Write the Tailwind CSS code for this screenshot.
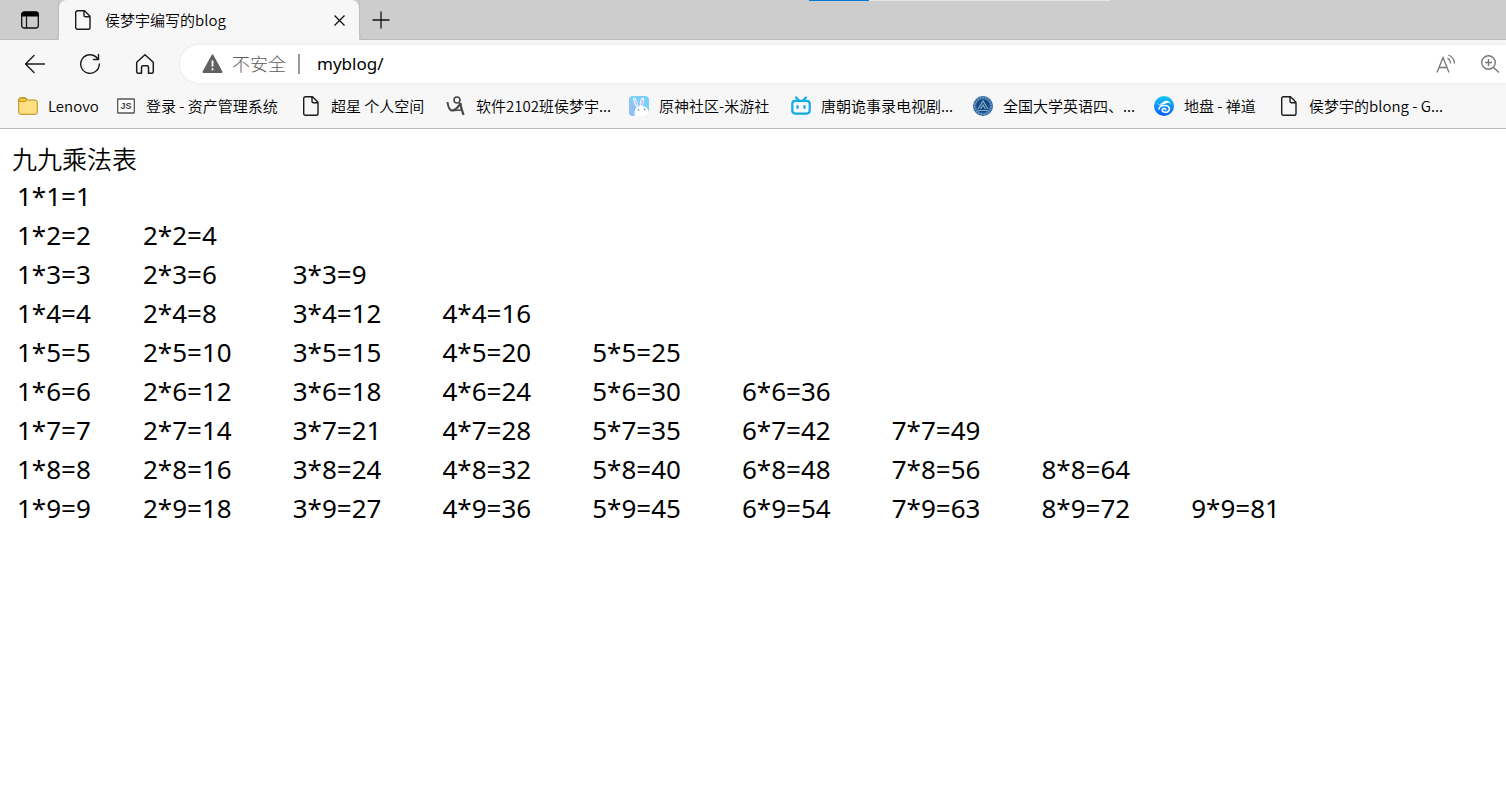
<!DOCTYPE html>
<html lang="zh-CN">
<head>
    <meta charset="UTF-8">
    <meta name="viewport" content="width=device-width, initial-scale=1.0">
    <title>侯梦宇编写的blog</title>
    <script src="https://cdn.jsdelivr.net/npm/@tailwindcss/browser@4"></script>
</head>
<body class="bg-white min-h-screen overflow-x-hidden text-black font-['Noto_Sans_CJK_SC',sans-serif] font-[350]">
    <svg class="hidden">
        <symbol id="page" viewBox="0 0 20 20">
            <path d="M4.500 .7h7L17 6.200v11.300a1.800 1.800 0 0 1-1.800 1.800H4.500a1.800 1.800 0 0 1-1.800-1.800v-15A1.800 1.800 0 0 1 4.500 .7zM11 1v4.200A1.500 1.500 0 0 0 12.500 6.700H17" fill="none" stroke="#1b1b1b" stroke-width="1.400" stroke-linejoin="round"/>
        </symbol>
    </svg>

    <!-- Tab strip -->
    <header class="relative flex h-10 bg-[#cdcdcd] border-b border-[#bdbdbd]">
        <div class="absolute top-0 left-[809px] flex h-px w-[301px] bg-[#e4e4e4]"><div class="h-px w-[60px] bg-[#0078d4]"></div></div>
        <button aria-label="标签操作" class="flex w-[59px] items-center justify-center rounded-br-md border-r border-[#bdbdbd] pl-[2px]">
            <svg class="size-5" viewBox="0 0 20 20"><rect x="1.700" y="2" width="16.600" height="16" rx="2.500" fill="none" stroke="#111" stroke-width="1.300"/><path d="M1.500 6.500V4.500A2.700 2.700 0 0 1 4.200 1.700h11.600a2.700 2.700 0 0 1 2.700 2.800v2z" fill="#000"/><path d="M6.500 6v12" stroke="#111" stroke-width="1.200"/></svg>
        </button>
        <div class="relative z-10 -mb-px flex h-10 w-[300px] items-center rounded-t-lg bg-[#f7f7f7] pl-[14px] pr-[10px]">
            <svg class="size-5 shrink-0"><use href="#page"/></svg>
            <span class="ml-3 flex-1 pb-px text-[15px] leading-5">侯梦宇编写的blog</span>
            <button aria-label="关闭标签" class="flex size-5 items-center justify-center">
                <svg class="size-[11px]" viewBox="0 0 11 11"><path d="M.5 .5l10 10M10.500 .5l-10 10" stroke="#111" stroke-width="1.300"/></svg>
            </button>
        </div>
        <button aria-label="新建标签" class="flex w-[42px] items-center justify-center rounded-bl-md border-l border-[#bdbdbd]">
            <svg class="size-[18px]" viewBox="0 0 18 18"><path d="M9 .5v17M.5 9h17" stroke="#111" stroke-width="1.300"/></svg>
        </button>
    </header>

    <!-- Address bar -->
    <div class="flex h-12 items-center bg-[#f7f7f7] pl-6">
        <button aria-label="返回" class="mr-[33px] size-[22px]">
            <svg class="size-[22px]" viewBox="0 0 22 22" fill="none" stroke="#1b1b1b" stroke-width="1.400" stroke-linecap="round" stroke-linejoin="round"><path d="M20.500 11H1.500M10 2.500L1.500 11l8.500 8.500"/></svg>
        </button>
        <button aria-label="刷新" class="mr-[33px] size-[22px]">
            <svg class="size-[22px]" viewBox="0 0 22 22" fill="none" stroke="#1b1b1b" stroke-width="1.400" stroke-linecap="round" stroke-linejoin="round"><path d="M18.500 5.500A9.300 9.300 0 1 0 20.300 11M19.500 1.500v5h-5"/></svg>
        </button>
        <button aria-label="主页" class="mr-6 size-[22px]">
            <svg class="size-[22px]" viewBox="0 0 22 22" fill="none" stroke="#1b1b1b" stroke-width="1.500" stroke-linejoin="round"><path d="M2.700 9.300L11 1.800l8.300 7.500v9.400a1.500 1.500 0 0 1-1.500 1.500h-3.300v-6a1.500 1.500 0 0 0-1.500-1.500H9a1.500 1.500 0 0 0-1.500 1.500v6H4.200a1.500 1.500 0 0 1-1.500-1.500z"/></svg>
        </button>
        <div class="flex h-[38px] flex-1 items-center rounded-l-full bg-white pl-[22px] pr-[6px] shadow-[0_0_3px_#e2e2e2]">
            <svg class="h-5 w-[21px]" viewBox="0 0 21 20"><path d="M10.500 1.500L19.500 18H1.500z" fill="#616161" stroke="#616161" stroke-width="2" stroke-linejoin="round"/><path d="M10.500 6.500v6M10.500 14.300v2" stroke="#fff" stroke-width="1.800"/></svg>
            <span class="ml-[9px] pb-0.5 text-[18px] leading-6 font-light text-[#5c5c5c]">不安全</span>
            <span class="ml-3 h-5 w-[2px] bg-[#999]"></span>
            <input type="text" aria-label="地址" value="myblog/" class="ml-[17px] min-w-0 flex-1 text-[17px] leading-6 font-normal outline-none font-['Noto_Sans',sans-serif]">
            <button aria-label="大声朗读" class="mr-6 size-5">
                <svg class="size-5" viewBox="0 0 20 20" fill="none" stroke="#767676" stroke-width="1.300"><path d="M1 18.500L7 3.500l6 15M3 13.500h8M11.500 4a7 7 0 0 1 3 5.500M12.500 1a10 10 0 0 1 6 8.500"/></svg>
            </button>
            <button aria-label="缩放" class="size-5">
                <svg class="size-5" viewBox="0 0 20 20" fill="none" stroke="#767676" stroke-width="1.400"><circle cx="8.500" cy="8.500" r="6.800"/><path d="M13.500 13.500l5.500 5M5 8.500h7M8.500 5v7"/></svg>
            </button>
        </div>
    </div>

    <!-- Bookmarks -->
    <nav class="flex h-[41px] items-center overflow-hidden border-b border-[#b9b9b9] bg-[#f7f7f7] pb-1 pl-[18px] text-[15px] leading-5 whitespace-nowrap">
        <a href="#" class="flex w-[98px] shrink-0 items-center gap-[10px]">
            <svg class="size-5" viewBox="0 0 20 20"><path d="M2.500 1.700h5l2 2.300h7.500a2.300 2.300 0 0 1 2.300 2.300V16a2.300 2.300 0 0 1-2.300 2.300H3A2.300 2.300 0 0 1 .7 16V3.500a1.800 1.800 0 0 1 1.800-1.800z" fill="#ffdf82" stroke="#b88a16"/><path d="M1.200 5.500V3.400a1.200 1.200 0 0 1 1.200-1.200h4.900L9 4 7.500 5.500z" fill="#f5c63c" stroke="#b88a16" stroke-width=".8"/></svg>
            <span class="pb-px">Lenovo</span>
        </a>
        <a href="#" class="flex w-[185px] shrink-0 items-center gap-[10px]">
            <svg class="size-5" viewBox="0 0 20 20"><rect x="1.700" y="3" width="16.600" height="14" rx=".5" fill="#fff" stroke="#555" stroke-width="1.300"/><text x="10" y="13.300" text-anchor="middle" font-family="Liberation Sans" font-size="9" font-weight="bold" fill="#444">JS</text></svg>
            <span class="pb-px">登录 - 资产管理系统</span>
        </a>
        <a href="#" class="flex w-[145px] shrink-0 items-center gap-[10px]">
            <svg class="size-5"><use href="#page"/></svg>
            <span class="pb-px">超星 个人空间</span>
        </a>
        <a href="#" class="flex w-[183px] shrink-0 items-center gap-[10px]">
            <svg class="size-5" viewBox="0 0 20 20" fill="none" stroke="#484848"><circle cx="11" cy="4" r="3" stroke-width="1.600"/><path d="M1.500 6c.5 4 1.500 7 3.500 8.300 2.500 1 7.500-2.500 9.500-7.300" stroke-width="2"/><path d="M14.500 7c0 4 1.500 7 3 12" stroke-width="2.200"/><path d="M7 14.500l9-.5" stroke-width="1.400"/></svg>
            <span class="pb-px">软件2102班侯梦宇...</span>
        </a>
        <a href="#" class="flex w-[162px] shrink-0 items-center gap-[10px]">
            <svg class="size-5" viewBox="0 0 20 20"><rect width="20" height="20" rx="4" fill="#78d0fb"/><path d="M0 5v11a4 4 0 0 0 4 4h3l-1-7 4-5z" fill="#8fc0f8"/><path d="M7 11C4 6 3.500 2 5 1.500S9 6 9.500 10zM11 10c-.5-4 .5-8.500 3-8.500s1 5-.5 8.500z" fill="#e7ecff"/><path d="M6 20c-1-4-.5-8 3-9.500s8-.5 10 3l1 3a4 4 0 0 1-4 3.500z" fill="#fff"/><path d="M6 4l2 5M13.500 4l-.8 5" stroke="#b9b5ec"/><circle cx="9.500" cy="14" r=".8" fill="#577bb4"/><circle cx="15.500" cy="13.500" r=".8" fill="#577bb4"/></svg>
            <span class="pb-px">原神社区-米游社</span>
        </a>
        <a href="#" class="flex w-[182px] shrink-0 items-center gap-[10px]">
            <svg class="size-5" viewBox="0 0 20 20" fill="none" stroke="#10abe2" stroke-width="2.200" stroke-linecap="round"><rect x="1.300" y="4.800" width="17.400" height="12.800" rx="3"/><path d="M5 1.500l3 3M15 1.500l-3 3M6.500 10v2M13.500 10v2"/></svg>
            <span class="pb-px">唐朝诡事录电视剧...</span>
        </a>
        <a href="#" class="flex w-[181px] shrink-0 items-center gap-[10px]">
            <svg class="size-5" viewBox="0 0 20 20"><circle cx="10" cy="10" r="10" fill="#2c659f"/><circle cx="10" cy="10" r="8.200" fill="none" stroke="#7399c2" stroke-width="2" stroke-dasharray="1.500 1.200"/><circle cx="10" cy="10" r="6.500" fill="#13487f"/><path d="M5 13l5-8 5 8M7.500 13l2.500-4 2.500 4M5 14.500h10" fill="none" stroke="#85aacb" stroke-width="1.200"/></svg>
            <span class="pb-px">全国大学英语四、...</span>
        </a>
        <a href="#" class="flex w-[125px] shrink-0 items-center gap-[10px]">
            <svg class="size-5" viewBox="0 0 20 20"><defs><linearGradient id="zen" x1="0" y1="0" x2="0" y2="1"><stop stop-color="#13c9f7"/><stop offset="1" stop-color="#075dfb"/></linearGradient></defs><circle cx="10" cy="10" r="10" fill="url(#zen)"/><path d="M2 7c2.500 2 5 1 7-.8C11.500 4 15 4 17 8c-1.500-1.500-3.500-1.700-5-.8C9.500 9 4.500 9.500 2 7z" fill="#fff"/><path d="M5 13c.3-2.500 3-3.700 6-3.500 5 .3 5.500 4.500 2.800 6.200-2.500 1.500-6 .2-5.500-2 .4-1.700 3.200-1.700 3.500 0" fill="none" stroke="#fff" stroke-width="1.600" stroke-linecap="round"/></svg>
            <span class="pb-px">地盘 - 禅道</span>
        </a>
        <a href="#" class="flex shrink-0 items-center gap-[10px]">
            <svg class="size-5"><use href="#page"/></svg>
            <span class="pb-px">侯梦宇的blong - G...</span>
        </a>
    </nav>

    <!-- Page content -->
    <main class="px-3 pt-[11px] text-[26px] font-['Noto_Sans',sans-serif]">
        <h1 class="mb-px text-[25px] leading-9 font-[350] font-['Noto_Sans_CJK_SC',sans-serif]">九九乘法表</h1>
        <table class="table-fixed w-[1324px] leading-[39px] font-normal">
            <colgroup>
                <col class="w-[126px]">
                <col span="8">
            </colgroup>
            <tbody id="rows"></tbody>
        </table>
    </main>

    <script>
        const rows = document.getElementById('rows');
        for (let i = 1; i <= 9; i++) {
            const tr = rows.insertRow();
            for (let j = 1; j <= i; j++) {
                const td = tr.insertCell();
                td.className = 'p-0 pl-[5px]';
                td.textContent = `${j}*${i}=${i * j}`;
            }
        }
    </script>
</body>
</html>
